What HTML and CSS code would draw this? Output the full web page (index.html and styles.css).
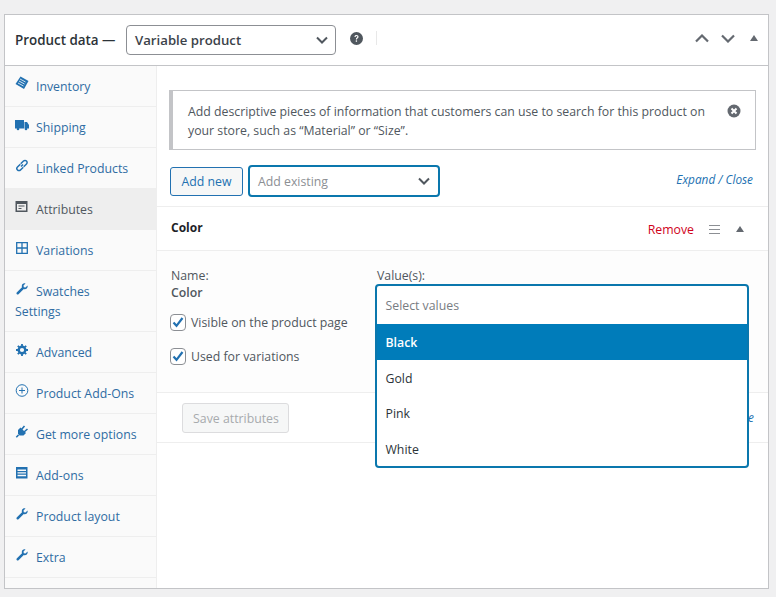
FILE: index.html
```html
<!DOCTYPE html>
<html lang="en">
<head>
    <meta charset="UTF-8">
    <title>Product data</title>
    <link rel="stylesheet" href="styles.css">
</head>
<body>
    <div class="panel">
        <div class="panel-head">
            <span class="panel-title">Product data —</span>
            <div class="type-select">
                <span>Variable product</span>
                <svg class="chevron" width="12" height="8" viewBox="0 0 12 8"><path d="M1 1.500l5 5 5-5" fill="none" stroke="#50575e" stroke-width="2"/></svg>
            </div>
            <svg class="help" width="13" height="13" viewBox="0 0 14 14"><circle cx="7" cy="7" r="7" fill="#50575e"/><path d="M4.800 5.400C4.900 4 5.800 3.300 7 3.300c1.300 0 2.200.8 2.200 1.900 0 1.800-1.700 1.500-1.700 3H6.300c0-2.200 1.600-2 1.600-3 0-.5-.4-.8-.9-.8-.6 0-.9.4-1 1z" fill="#fff"/><rect x="6.200" y="9" width="1.400" height="1.500" fill="#fff"/></svg>
            <span class="divider"></span>
            <div class="head-actions">
                <svg width="14" height="9" viewBox="0 0 14 9"><path d="M1 7.500l6-6 6 6" fill="none" stroke="#646970" stroke-width="2.200"/></svg>
                <svg width="14" height="9" viewBox="0 0 14 9"><path d="M1 1.500l6 6 6-6" fill="none" stroke="#646970" stroke-width="2.200"/></svg>
                <span class="tri"></span>
            </div>
        </div>
        <div class="panel-body">
            <ul class="tabs">
                <li><svg class="ico" width="14" height="14" viewBox="0 0 14 14"><path d="M5.500.5l8 4.500-4.500 8-8.500-5z" fill="#2271b1"/><path d="M5 3l5.500 3M4 5l5.500 3M3 7l5.500 3" stroke="#fff" stroke-width=".8"/></svg>Inventory</li>
                <li><svg class="ico" width="14" height="12" viewBox="0 0 14 12"><path d="M0 1h9v8.500H0zM9.500 3H12l2 3v3.500H9.500z" fill="#2271b1"/><circle cx="3" cy="10" r="1.300" fill="#2271b1"/><circle cx="11" cy="10" r="1.300" fill="#2271b1"/></svg>Shipping</li>
                <li><svg class="ico" width="13" height="13" viewBox="0 0 13 13"><path d="M5.500 7.500l2-2M4.800 5.200L2 8a2 2 0 0 0 3 3l2.800-2.800M5.200 4.800L8 2a2 2 0 0 1 3 3L8.200 7.800" fill="none" stroke="#2271b1" stroke-width="1.500"/></svg>Linked Products</li>
                <li class="active"><svg class="ico" width="13" height="12" viewBox="0 0 13 12"><path d="M0 0h12v11H0zM1.500 3v6.500h9V3zM3 4.500h6v1H3zM3 7h3v1H3z" fill="#50575e" fill-rule="evenodd"/></svg>Attributes</li>
                <li><svg class="ico" width="12" height="12" viewBox="0 0 12 12"><path d="M.7.700h10.600v10.600H.7zM6 .7v10.600M.7 6h10.600" fill="none" stroke="#2271b1" stroke-width="1.300"/></svg>Variations</li>
                <li class="two-line"><svg class="ico" width="12" height="12" viewBox="0 0 12 12"><use href="#wrench"/></svg>Swatches<br>Settings</li>
                <li><svg class="ico" width="12" height="12" viewBox="0 0 12 12"><circle cx="6" cy="6" r="3.300" fill="none" stroke="#2271b1" stroke-width="2.400"/><path d="M6 0v12M0 6h12M1.800 1.800l8.400 8.400M10.200 1.800l-8.400 8.400" stroke="#2271b1" stroke-width="1.800" stroke-dasharray="2 8 2"/></svg>Advanced</li>
                <li><svg class="ico" width="13" height="13" viewBox="0 0 13 13"><circle cx="6.500" cy="6.500" r="5.800" fill="none" stroke="#2271b1"/><path d="M6.500 3.500v6M3.500 6.500h6" stroke="#2271b1"/></svg>Product Add-Ons</li>
                <li><svg class="ico" width="13" height="13" viewBox="0 0 13 13"><path d="M5 2.500l5.500 5.500-2.500 2.500H4L2.500 9V5z" fill="#2271b1"/><path d="M6 4.500l3-3.500M8.500 7L12 4M3 10L.8 12.200" stroke="#2271b1" stroke-width="1.600"/></svg>Get more options</li>
                <li><svg class="ico" width="12" height="12" viewBox="0 0 12 12"><path d="M0 0h11.500v11.500H0zM1.500 2.500v1.500h8.500V2.500zM1.500 5.200v1.300h8.500V5.200zM1.500 7.800v1.500h8.500V7.800z" fill="#2271b1" fill-rule="evenodd"/></svg>Add-ons</li>
                <li><svg class="ico" width="12" height="12" viewBox="0 0 12 12"><use href="#wrench"/></svg>Product layout</li>
                <li><svg class="ico" width="12" height="12" viewBox="0 0 12 12"><use href="#wrench"/></svg>Extra</li>
            </ul>
            <div class="main">
                <div class="notice">
                    <p>Add descriptive pieces of information that customers can use to search for this product on your store, such as “Material” or “Size”.</p>
                    <svg class="dismiss" width="14" height="14" viewBox="0 0 14 14"><circle cx="7" cy="7" r="6.500" fill="#646970"/><path d="M4.500 4.500l5 5M9.500 4.500l-5 5" stroke="#fff" stroke-width="2"/></svg>
                </div>
                <div class="toolbar">
                    <button class="btn-add">Add new</button>
                    <div class="add-existing">
                        <span>Add existing</span>
                        <svg width="12" height="8" viewBox="0 0 12 8"><path d="M1 1.500l5 5 5-5" fill="none" stroke="#50575e" stroke-width="2"/></svg>
                    </div>
                    <a class="expand">Expand / Close</a>
                </div>
                <div class="attr-head">
                    <strong>Color</strong>
                    <a class="remove">Remove</a>
                    <span class="handle"></span>
                    <span class="tri"></span>
                </div>
                <div class="attr-body">
                    <div class="attr-left">
                        <div class="attr-label">Name:</div>
                        <div class="attr-name">Color</div>
                        <label class="check"><span class="box"><svg width="12" height="11" viewBox="0 0 12 11"><path d="M1.500 5.500l3 3.300L10.500 1" fill="none" stroke="#2271b1" stroke-width="2.200"/></svg></span>Visible on the product page</label>
                        <label class="check"><span class="box"><svg width="12" height="11" viewBox="0 0 12 11"><path d="M1.500 5.500l3 3.300L10.500 1" fill="none" stroke="#2271b1" stroke-width="2.200"/></svg></span>Used for variations</label>
                    </div>
                    <div class="attr-right">
                        <div class="attr-label">Value(s):</div>
                        <div class="dropdown">
                            <div class="dd-search">Select values</div>
                            <div class="dd-option selected">Black</div>
                            <div class="dd-option">Gold</div>
                            <div class="dd-option">Pink</div>
                            <div class="dd-option">White</div>
                        </div>
                    </div>
                </div>
                <div class="attr-foot">
                    <button class="btn-save" disabled>Save attributes</button>
                    <a class="expand">Expand / Close</a>
                </div>
            </div>
        </div>
    </div>
    <svg width="0" height="0" class="defs"><defs>
        <path id="wrench" d="M11.500 2.500L9.500 4.500 7.800 4.200 7.500 2.500 9.500.5C7.800-.2 5.800 1 5.800 3c0 .5 0 .8.200 1.200L.7 9.500a1.300 1.300 0 0 0 1.800 1.800L7.800 6c2.200.8 4.500-1.300 3.700-3.500z" fill="#2271b1"/>
    </defs></svg>
</body>
</html>
```

FILE: styles.css
```css
* {
    margin: 0;
    padding: 0;
    box-sizing: border-box;
}

body {
    font-family: 'Open Sans', 'Noto Sans', sans-serif;
    font-size: 12.3px;
    line-height: 19px;
    background-color: #f0f0f1;
    color: #50575e;
    padding: 14px 7px 0 4px;
    height: 597px;
    overflow: hidden;
}

a {
    color: #2271b1;
}

.defs {
    position: absolute;
}

.panel {
    height: 575px;
    background-color: white;
    border: 1px solid #c3c4c7;
    display: flex;
    flex-direction: column;
}

.panel-head {
    height: 51px;
    flex-shrink: 0;
    border-bottom: 1px solid #c3c4c7;
    display: flex;
    align-items: center;
    padding-left: 10px;
}

.panel-title {
    font-size: 13.4px;
    font-weight: 600;
    color: #2c3338;
    width: 111px;
    white-space: nowrap;
}

.type-select {
    width: 210px;
    height: 30px;
    border: 1px solid #8c8f94;
    border-radius: 4px;
    display: flex;
    align-items: center;
    justify-content: space-between;
    padding: 0 7px 0 8px;
    font-size: 13.2px;
    font-weight: 600;
    color: #3c434a;
}

.help {
    margin: -3px 0 0 14px;
}

.divider {
    width: 1px;
    height: 14px;
    margin: -4px 0 0 13px;
    background-color: #e8e8e8;
}

.head-actions {
    margin-left: auto;
    display: flex;
    align-items: center;
    gap: 12px;
    padding: 0 10px 4px 0;
}

.tri {
    width: 0;
    height: 0;
    border-left: 4px solid transparent;
    border-right: 4px solid transparent;
    border-bottom: 6px solid #646970;
}

.head-actions .tri {
    margin-left: 3px;
}

.panel-body {
    flex: 1;
    display: flex;
    min-height: 0;
}

.tabs {
    width: 152px;
    flex-shrink: 0;
    list-style: none;
    background-color: #fafafa;
    border-right: 1px solid #eee;
}

.tabs li {
    padding: 11px 10px 10px;
    border-bottom: 1px solid #eee;
    color: #2f6ca3;
}

.tabs li.two-line {
    line-height: 20px;
    padding-bottom: 9px;
}

.tabs li.active {
    background-color: #eee;
    color: #50575e;
}

.ico {
    margin: 0 7px 0 0;
    width: 14px;
    vertical-align: -1px;
    position: relative;
    top: -2px;
}

.main {
    flex: 1;
    min-width: 0;
}

.notice {
    margin: 24px 12px 0 12px;
    height: 60px;
    border: 1px solid #c3c4c7;
    border-left-width: 4px;
    padding: 11px 14px 0 15px;
    display: flex;
    justify-content: space-between;
}

.notice p {
    width: 530px;
}

.dismiss {
    margin-top: 2px;
}

.toolbar {
    display: flex;
    align-items: center;
    height: 32px;
    margin: 15px 15px 0 13px;
}

.btn-add {
    width: 73px;
    height: 29px;
    border: 1px solid #2271b1;
    border-radius: 3px;
    background-color: #f6f7f7;
    color: #2271b1;
    font: inherit;
}

.add-existing {
    width: 192px;
    height: 32px;
    margin-left: 5px;
    border: 2px solid #0a77ad;
    border-radius: 4px;
    display: flex;
    align-items: center;
    justify-content: space-between;
    padding: 0 8px;
    color: #8c8f94;
}

.expand {
    margin-left: auto;
    font-size: 11.8px;
    font-style: italic;
}

.toolbar .expand {
    margin-top: -3px;
}

.attr-head {
    margin-top: 9px;
    height: 45px;
    border-top: 1px solid #eee;
    border-bottom: 1px solid #eee;
    display: flex;
    align-items: center;
    padding: 1px 24px 0 14px;
}

.attr-head strong {
    color: #1d2327;
    font-weight: 700;
    font-size: 12px;
    margin: -4px auto 0 0;
}

.remove {
    color: #d0021b;
}

.handle {
    width: 11px;
    height: 9px;
    margin: 0 16px 0 15px;
    border-top: 1px solid #8c8f94;
    border-bottom: 1px solid #8c8f94;
    background: linear-gradient(#8c8f94, #8c8f94) center / 100% 1px no-repeat;
}

.attr-body {
    height: 141px;
    background-color: #fdfdfd;
    display: flex;
    padding: 15px 14px 0;
}

.attr-left {
    width: 206px;
}

.attr-name {
    font-weight: 600;
    margin-top: -2px;
}

.check {
    display: flex;
    align-items: center;
    gap: 5px;
    margin: 11px 0 0 -1px;
    height: 18px;
}

.check + .check {
    margin-top: 16px;
}

.box {
    width: 16px;
    height: 17px;
    border: 1px solid #8c8f94;
    border-radius: 4px;
    background-color: white;
    display: flex;
    align-items: center;
    justify-content: center;
}

.attr-right {
    position: relative;
    flex: 1;
}

.dropdown {
    position: absolute;
    top: 18px;
    left: -2px;
    width: 374px;
    height: 184px;
    background-color: white;
    border: 2px solid #0a77ad;
    border-radius: 4px;
    z-index: 2;
}

.dd-search {
    height: 38px;
    padding: 10px 8.5px;
    color: #787c82;
}

.dd-option {
    height: 35.5px;
    padding: 8.5px 8.5px 0;
    color: #2c3338;
}

.dd-option.selected {
    background-color: #007cba;
    color: white;
    font-weight: 600;
    height: 36px;
}

.attr-foot {
    height: 51px;
    border-top: 1px solid #eee;
    border-bottom: 1px solid #eee;
    display: flex;
    align-items: center;
    padding: 0 14px 0 25px;
}

.btn-save {
    width: 107px;
    height: 30px;
    padding: 2px 0 0 1px;
    border: 1px solid #dcdcde;
    border-radius: 3px;
    background-color: #f6f7f7;
    color: #a7aaad;
    font: inherit;
}
```
